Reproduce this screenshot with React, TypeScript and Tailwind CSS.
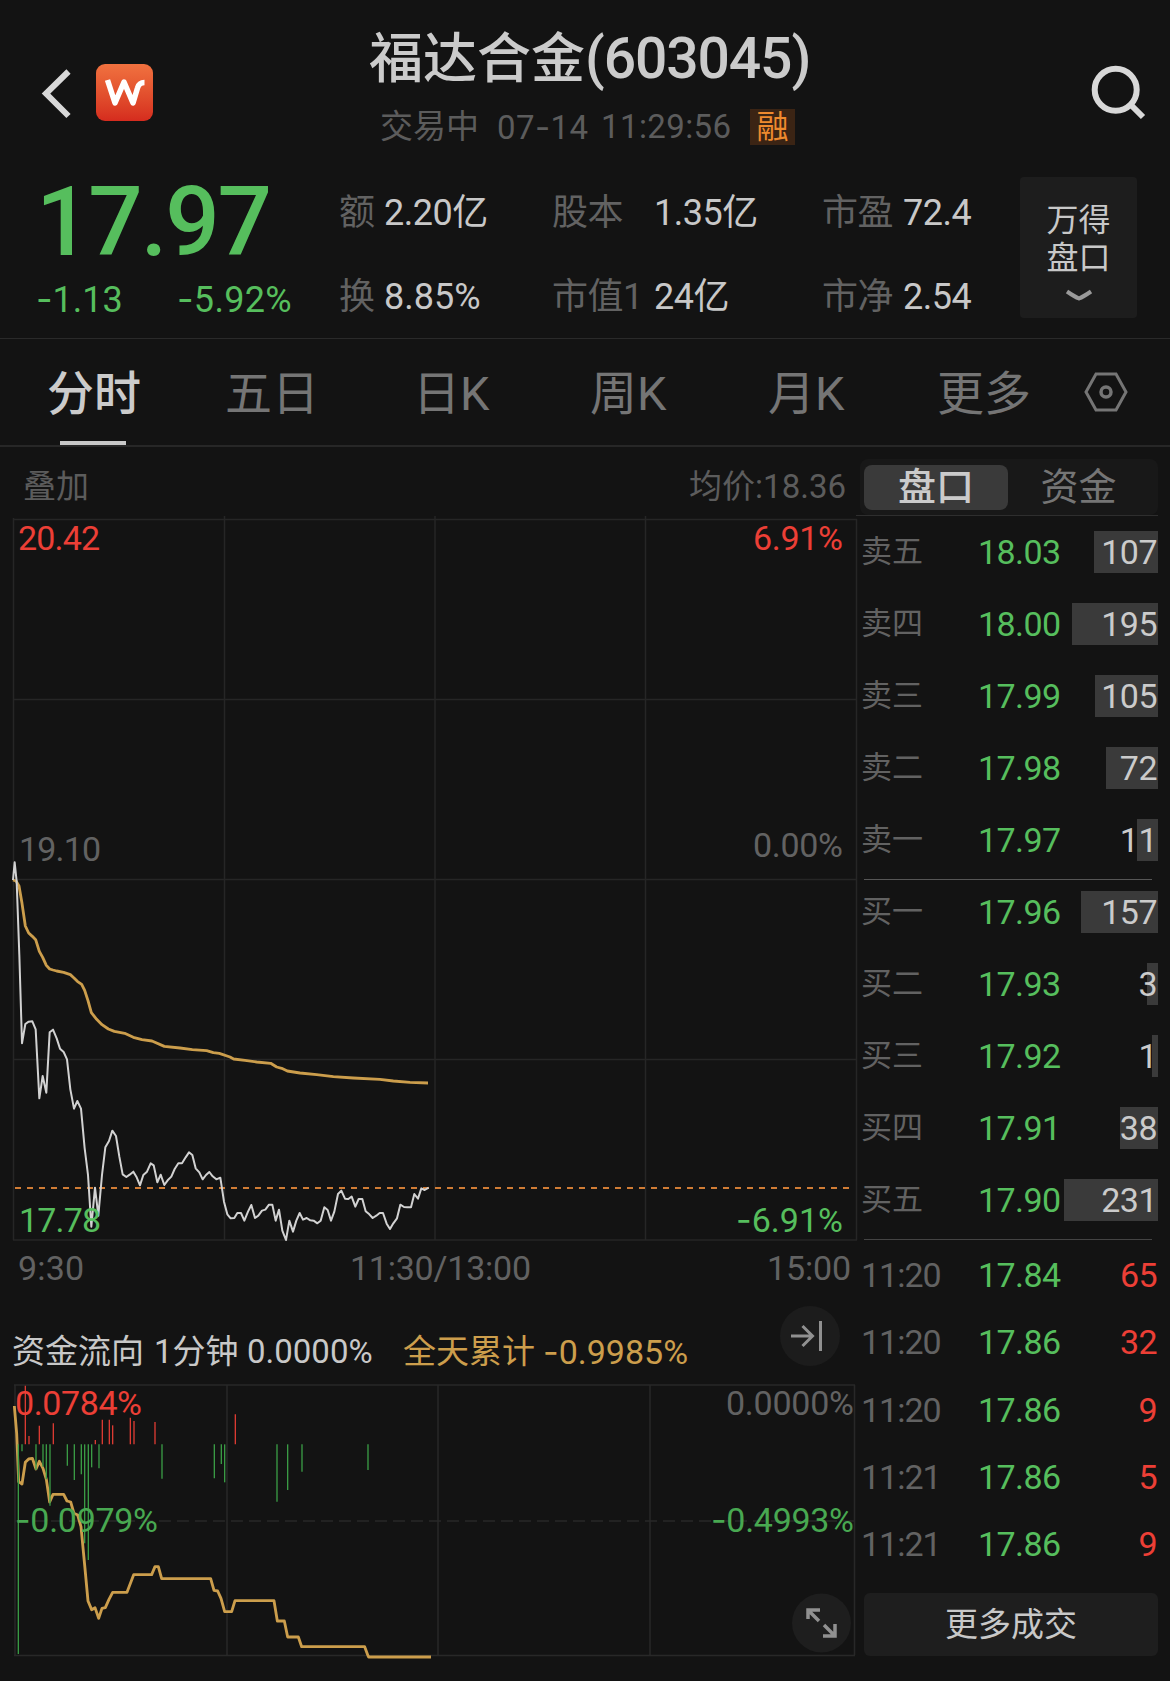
import React, { useState } from "react";

type Level = { label: string; price: string; volume: number; bar: number };
type Trade = { time: string; price: string; volume: number };

const LEVELS: Level[] = [
	{ label: "卖五", price: "18.03", volume: 107, bar: 64 },
	{ label: "卖四", price: "18.00", volume: 195, bar: 86 },
	{ label: "卖三", price: "17.99", volume: 105, bar: 63 },
	{ label: "卖二", price: "17.98", volume: 72, bar: 52 },
	{ label: "卖一", price: "17.97", volume: 11, bar: 21 },
	{ label: "买一", price: "17.96", volume: 157, bar: 77 },
	{ label: "买二", price: "17.93", volume: 3, bar: 11 },
	{ label: "买三", price: "17.92", volume: 1, bar: 6 },
	{ label: "买四", price: "17.91", volume: 38, bar: 38 },
	{ label: "买五", price: "17.90", volume: 231, bar: 94 },
];

const TRADES: Trade[] = [
	{ time: "11:20", price: "17.84", volume: 65 },
	{ time: "11:20", price: "17.86", volume: 32 },
	{ time: "11:20", price: "17.86", volume: 9 },
	{ time: "11:21", price: "17.86", volume: 5 },
	{ time: "11:21", price: "17.86", volume: 9 },
];

const PRICE_LINE =
	"39,120 44,67 50,125 58,345 66,610 76,552 86,545 97,544 107,568 118,775 128,708 139,758 149,577 159,569 170,595 180,626 191,636 201,658 211,748 222,806 232,783 243,806 254,925 264,1005 274,1160 285,1043 295,1127 306,1005 316,922 327,903 337,872 348,888 358,950 368,1003 379,1011 389,1004 400,995 410,1012 420,1036 430,1005 441,995 452,970 461,976 472,1027 482,1004 493,1035 503,1021 514,1010 524,987 535,970 546,970 557,952 567,937 577,945 587,985 598,997 608,1018 618,1005 628,996 638,1009 649,1018 661,1013 672,1085 682,1123 692,1135 703,1134 712,1119 723,1119 733,1142 744,1115 754,1095 765,1134 775,1127 786,1112 796,1109 807,1094 817,1094 827,1142 837,1109 847,1172 858,1200 868,1142 879,1175 889,1142 899,1119 909,1139 920,1134 931,1141 941,1142 952,1150 962,1142 973,1102 983,1110 993,1142 1003,1115 1014,1062 1024,1052 1035,1076 1045,1077 1055,1070 1066,1100 1076,1077 1087,1077 1097,1114 1108,1123 1118,1134 1129,1127 1139,1119 1149,1119 1160,1151 1170,1167 1180,1150 1191,1135 1201,1094 1212,1101 1222,1102 1233,1102 1243,1062 1254,1076 1264,1045 1274,1050 1286,1043";

const AVERAGE_LINE =
	"39,120 48,123 57,138 66,190 76,258 86,279 97,289 107,299 118,334 128,352 139,376 149,387 159,390 170,393 191,397 211,404 222,414 232,424 245,433 254,451 264,482 274,518 290,538 306,554 325,567 343,574 374,580 400,592 426,599 456,603 493,619 540,624 577,629 620,632 640,638 658,640 690,651 701,657 735,661 770,666 812,670 830,681 845,685 862,693 900,699 950,704 1000,710 1060,714 1140,718 1180,723 1230,727 1284,729";

const FLOW_LINE =
	"43,318 50,400 56,545 66,552 76,487 86,477 97,475 108,507 118,484 129,505 139,538 149,606 159,583 191,583 201,603 212,606 222,640 233,645 243,680 254,795 264,903 275,929 285,923 296,955 306,925 316,923 327,898 338,877 381,877 401,824 455,824 465,800 475,800 485,836 632,836 642,871 653,873 663,895 674,935 695,935 705,902 822,902 832,963 853,963 863,1011 895,1011 905,1040 1094,1040 1104,1067 1106,1071 1293,1071";

// [x, end y], all bars start from the zero line
const INFLOW: number[][] = [
	[76, 257], [87, 408], [118, 377], [160, 370], [286, 420], [307, 359], [328, 359],
	[338, 376], [391, 353], [402, 363], [465, 366], [706, 343],
];
const OUTFLOW: number[][] = [
	[55, 1062], [66, 454], [108, 510], [129, 500], [139, 538], [150, 617], [202, 497],
	[223, 540], [244, 523], [254, 730], [265, 780], [275, 502], [297, 505], [486, 536],
	[643, 535], [664, 492], [674, 547], [831, 605], [863, 570], [906, 515], [1104, 510],
];
const ZERO_LINE = 433;

function Num({ children }: { children: string }) {
	const negative = children.startsWith("-");
	return (
		<>
			{negative && <span className="font-['Inter']">-</span>}
			{negative ? children.slice(1) : children}
		</>
	);
}

function Label({ x, y, w, fill, children }: { x: number; y: number; w: number; fill: string; children: string }) {
	const negative = children.startsWith("-");
	return (
		<text x={x} y={y} fill={fill} fontSize={34} textLength={w}>
			{negative && <tspan className="font-['Inter']">-</tspan>}
			{negative ? children.slice(1) : children}
		</text>
	);
}

function Header() {
	return (
		<header className="flex h-[160px]">
			<div className="flex w-[369px] pt-[64px] pl-[38px]">
				<svg width="38" height="58" viewBox="0 0 38 58" fill="none" stroke="#d8d8d8" strokeWidth="6">
					<path d="M30.500 7.500 L8 29.500 L30.500 52" />
				</svg>
				<div className="ml-5 h-[57px] w-[57px] rounded-[9px] bg-gradient-to-b from-[#f0713f] to-[#d52b1e]">
					<svg width="57" height="57" viewBox="0 0 57 57" fill="none" stroke="#fff" strokeWidth="5.500" strokeLinejoin="round">
						<path d="M11.500 16 L19 39 L28 18 L37 39 L41.500 24 Q43 18.500 48.500 18.500" />
					</svg>
				</div>
			</div>
			<div className="pt-[27px]">
				<h1 className="text-[54px] leading-[64px] font-medium whitespace-nowrap text-[#cbcbcb]">
					福达合金<span className="text-[57px] tracking-[-1.1px]">(603045)</span>
				</h1>
				<div className="mt-[17px] flex pl-[11px] text-[33px] leading-9 whitespace-nowrap text-[#5c5c5c]">
					<span className="w-[117px]">交易中</span>
					<span className="w-[104px] tracking-[0.4px]"><span>07</span><span className="font-['Inter']">-</span>14</span>
					<span className="w-[149px] tracking-[0.4px]">11:29:56</span>
					<span className="flex h-9 w-[45px] justify-center bg-[#3b2414] text-[32px] text-[#ee8a2e]">融</span>
				</div>
			</div>
			<svg className="mt-[62px] mr-[22px] ml-auto" width="60" height="60" viewBox="0 0 60 60" fill="none" stroke="#d8d8d8" strokeWidth="6">
				<circle cx="27.700" cy="27.700" r="21" />
				<path d="M42.500 42.500 L55 55" />
			</svg>
		</header>
	);
}

function Quote() {
	return (
		<section className="flex h-[179px] border-b border-[#2a2a2a] text-[#c8c8c8]">
			<div className="w-[339px] pt-[14px] pl-[36px] text-[#56be5d]">
				<div className="text-[96px] leading-[96px] font-medium tracking-[-2.2px]">17.97</div>
				<div className="mt-[9px] flex text-[36px] leading-10">
					<span className="w-[141px]"><Num>-1.13</Num></span>
					<span className="tracking-[0.3px]"><Num>-5.92%</Num></span>
				</div>
			</div>
			<div className="grid grid-cols-[45px_168px_102px_168px_81px_117px] grid-rows-[84px_84px] pt-[11px] text-[36px] leading-[84px] tracking-[-0.5px] whitespace-nowrap">
				<span className="text-[#626262]">额</span>
				<span>2.20亿</span>
				<span className="text-[#626262]">股本</span>
				<span>1.35亿</span>
				<span className="text-[#626262]">市盈</span>
				<span>72.4</span>
				<span className="text-[#626262]">换</span>
				<span className="tracking-normal">8.85%</span>
				<span className="text-[#626262]">市值1</span>
				<span>24亿</span>
				<span className="text-[#626262]">市净</span>
				<span>2.54</span>
			</div>
			<button className="mt-[17px] flex h-[141px] w-[117px] flex-col items-center rounded bg-[#1d1d1d] pt-[24px] text-[32px] leading-[38px]">
				<span>万得</span>
				<span>盘口</span>
				<svg className="mt-[11px]" width="28" height="16" viewBox="0 0 28 16" fill="none" stroke="#9a9a9a" strokeWidth="4">
					<path d="M2 3.500 Q10 9 14 10.500 Q18 9 26 3.500" />
				</svg>
			</button>
		</section>
	);
}

const TABS = [
	{ name: "分时", className: "w-[178px]" },
	{ name: "五日", className: "w-[188px]" },
	{ name: "日K", className: "w-[177px]" },
	{ name: "周K", className: "w-[178px]" },
	{ name: "月K", className: "w-[169px]" },
	{ name: "更多", className: "w-[147px]" },
];

function Tabs() {
	const [active, setActive] = useState("分时");

	return (
		<nav className="flex h-[108px] border-b-2 border-[#272727] pl-[47px] text-[47px] leading-[94px]">
			{TABS.map((tab) => (
				<button
					key={tab.name}
					onClick={() => setActive(tab.name)}
					className={`flex shrink-0 flex-col items-start pt-2 ${tab.className} ${active === tab.name ? "font-medium text-[#cbcbcb]" : "text-[#757575]"}`}
				>
					<span>{tab.name}</span>
					{active === tab.name && <span className="ml-[13px] h-1 w-[66px] bg-[#c8c8c8]" />}
				</button>
			))}
			<svg className="mt-[32px] -ml-px" width="46" height="42" viewBox="0 0 46 42" fill="none" stroke="#757575" strokeWidth="3">
				<path d="M13 3 H33 L43 21 L33 39 H13 L3 21 Z" />
				<circle cx="23" cy="21" r="5" strokeWidth="3.500" />
			</svg>
		</nav>
	);
}

function PriceChart() {
	return (
		<svg className="block" width="860" height="776" viewBox="0 0 860 776" fill="none">
			<g stroke="#262626" strokeWidth="1.500">
				<path d="M13 3.500 H857 M13 183.500 H857 M13 363.500 H857 M13 543.500 H857 M13 724 H857" />
				<path d="M13.500 2 V724 M224.500 0 V724 M435 0 V724 M645.500 0 V724 M856.500 3 V724" />
			</g>
			<path d="M15 672 H850" stroke="#d07c35" strokeWidth="2" strokeDasharray="6 6" />
			<g transform="translate(0 324) scale(0.33333)" strokeLinejoin="round">
				<polyline points={AVERAGE_LINE} stroke="#cc9e4c" strokeWidth="8.500" />
				<polyline points={PRICE_LINE} stroke="#d2d2d2" strokeWidth="6" />
			</g>
			<Label x={18} y={34} w={82} fill="#ec3f36">20.42</Label>
			<Label x={753} y={34} w={90} fill="#ec3f36">6.91%</Label>
			<Label x={19} y={345} w={82} fill="#626262">19.10</Label>
			<Label x={753} y={341} w={90} fill="#626262">0.00%</Label>
			<Label x={19} y={716} w={82} fill="#56be5d">17.78</Label>
			<Label x={736} y={716} w={107} fill="#56be5d">-6.91%</Label>
			<Label x={18} y={764} w={66} fill="#626262">9:30</Label>
			<Label x={350} y={764} w={181} fill="#626262">11:30/13:00</Label>
			<Label x={767} y={764} w={84} fill="#626262">15:00</Label>
		</svg>
	);
}

function FlowChart() {
	return (
		<svg className="block" width="860" height="301" viewBox="0 0 860 301" fill="none">
			<g stroke="#282828" strokeWidth="1.500">
				<path d="M14 5 H855 M14 275.500 H855" />
				<path d="M15 5 V275 M227 5 V275 M438 5 V275 M650 5 V275 M854.500 5 V275" />
				<path d="M15 141 H855" strokeDasharray="12 6" />
			</g>
			<g transform="translate(0 -80) scale(0.33333)" strokeLinejoin="round">
				<polyline points={FLOW_LINE} stroke="#cc9e4c" strokeWidth="8.500" />
				{INFLOW.map(([x, y]) => (
					<path key={x} d={`M${x} ${ZERO_LINE} V${y}`} stroke="#dc3b33" strokeWidth="4" />
				))}
				{OUTFLOW.map(([x, y]) => (
					<path key={x} d={`M${x} ${ZERO_LINE} V${y}`} stroke="#3a9b45" strokeWidth="4" />
				))}
			</g>
			<Label x={15} y={35} w={127} fill="#ec3f36">0.0784%</Label>
			<Label x={726} y={35} w={128} fill="#626262">0.0000%</Label>
			<Label x={15} y={152} w={143} fill="#48a851">-0.0979%</Label>
			<Label x={711} y={152} w={143} fill="#48a851">-0.4993%</Label>
			<circle cx="821.500" cy="243" r="29.500" fill="#1e1e1e" />
			<path d="M808 239 V230 H820 M809 231 L819 241 M824 245 L834 255 M823 256 H835 V244" stroke="#909090" strokeWidth="3.500" />
		</svg>
	);
}

function OrderBook() {
	return (
		<aside className="flex w-[310px] flex-col pr-[12px]">
			<div className="mt-[12px] flex h-[56px] items-center rounded-lg bg-[#181818] pr-[9px] pl-1 text-[38px] leading-[45px]">
				<button className="h-[45px] w-[144px] rounded-lg bg-[#3a3a3a] font-medium text-[#cbcbcb]">盘口</button>
				<button className="flex-1 text-[#757575]">资金</button>
			</div>
			<div className="-ml-1 h-px w-[302px] bg-[#2e2e2e]" />
			<div>
				{LEVELS.map((level, i) => (
					<div key={level.label}>
						{i === 5 && <div className="mt-[3px] mr-[6px] -mb-1 ml-1 h-px bg-[#565656]" />}
						<div className="flex h-[72px] items-center pl-px leading-[42px]">
							<span className="w-[117px] text-[31px] text-[#626262]">{level.label}</span>
							<span className="text-[34px] tracking-[-0.6px] text-[#56be5d]">{level.price}</span>
							<span className="relative ml-auto flex h-[42px] items-center justify-end text-[34px] tracking-[-0.5px] text-[#cbcbcb]">
								<i className="absolute top-0 right-0 h-[42px] bg-[#3a3a3a]" style={{ width: level.bar }} />
								<span className="relative pr-px">{level.volume}</span>
							</span>
						</div>
					</div>
				))}
				<div className="mt-[3px] mr-[6px] mb-[2px] ml-1 h-px bg-[#444]" />
				{TRADES.map((trade, i) => (
					<div key={i} className="flex h-[67.3px] items-center pl-px text-[34px] tracking-[-0.6px]">
						<span className="w-[117px] tracking-[-1px] text-[#626262]">{trade.time}</span>
						<span className="text-[#56be5d]">{trade.price}</span>
						<span className="ml-auto pr-px text-[#ec3f36]">{trade.volume}</span>
					</div>
				))}
			</div>
			<button className="mt-[15px] ml-1 h-[63px] rounded-md bg-[#1e1e1e] text-[33px] text-[#c8c8c8]">更多成交</button>
		</aside>
	);
}

export default function App() {
	return (
		<div className="h-[1681px] w-[1170px] overflow-hidden bg-[#131313] font-['Roboto','Noto_Sans_CJK_SC',sans-serif]">
			<Header />
			<Quote />
			<Tabs />
			<main className="flex">
				<div className="w-[860px]">
					<div className="flex h-[69px] justify-between pt-[19px] pr-[14px] pl-[23px] text-[33px] leading-[42px] text-[#5c5c5c]">
						<span>叠加</span>
						<span>均价:18.36</span>
					</div>
					<PriceChart />
					<div className="flex h-[88px] pt-[39px] pl-[12px] text-[33px] leading-[42px] whitespace-nowrap text-[#c8c8c8]">
						<span className="w-[142px]">资金流向</span>
						<span className="w-[93px]">1分钟</span>
						<span className="w-[156px]">0.0000%</span>
						<span className="w-[140px] text-[#cc9e4c]">全天累计</span>
						<span className="text-[34px] text-[#cc9e4c]"><Num>-0.9985%</Num></span>
						<svg className="-mt-[25px] mr-[20px] ml-auto" width="60" height="60" viewBox="0 0 60 60" fill="none" stroke="#909090" strokeWidth="3">
							<circle cx="30" cy="30" r="30" fill="#1c1c1c" stroke="none" />
							<path d="M11 30 H32 M22.500 20 L32.500 30 L22.500 40 M40.500 15 V45" />
						</svg>
					</div>
					<FlowChart />
				</div>
				<OrderBook />
			</main>
		</div>
	);
}
